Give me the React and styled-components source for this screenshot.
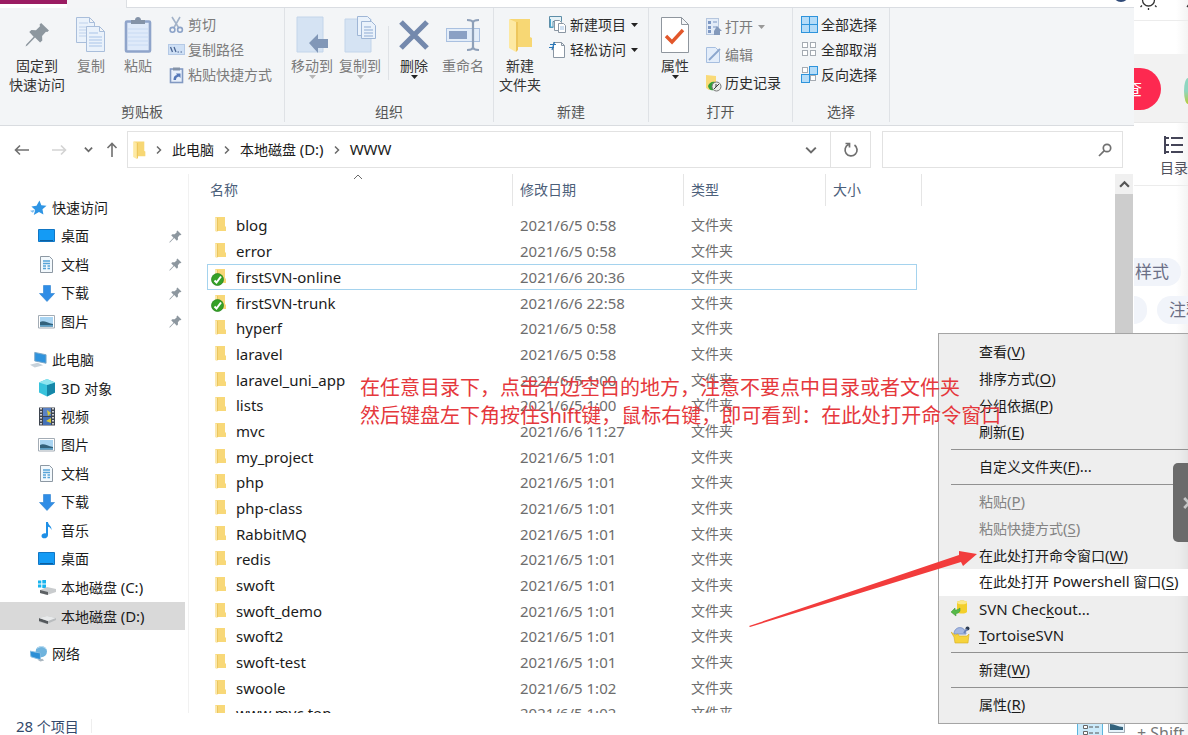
import React from "react";
import styled, { createGlobalStyle, css } from "styled-components";

const Global = createGlobalStyle`
  * { box-sizing: border-box; }
  body { margin: 0; background: #fff; overflow: hidden; }
  body, button, input, table {
    font-family: "Noto Sans", "Noto Sans CJK SC", sans-serif;
    font-size: 14px;
    line-height: 20px;
    color: #1b1b1b;
  }
  button { background: none; border: 0; padding: 0; margin: 0; }
  svg { display: block; flex: none; }
`;

const Page = styled.div`
  position: relative;
  display: flex;
  height: 100vh;
  overflow: hidden;
`;
const Explorer = styled.main`
  flex: 1;
  min-width: 0;
  display: flex;
  flex-direction: column;
`;
const Latin = styled.span`
  font-size: 15px;
`;

/* ---------- tabs and ribbon ---------- */
const TabStrip = styled.div`
  display: flex;
  height: 8px;
  overflow: hidden;
`;
const FileTab = styled.div`
  width: 67px;
  height: 4px;
  background: #9b1d63;
`;
const ActiveTab = styled.div`
  width: 60px;
  background: #f4f5f7;
  border-right: 1px solid #dcdfe3;
`;
const TabRest = styled.div`
  flex: 1;
  display: flex;
  justify-content: flex-end;
  padding-right: 5px;
  border-bottom: 1px solid #dadde2;
`;
const Ribbon = styled.div`
  display: flex;
  height: 118px;
  padding-bottom: 3px;
  background: #f3f5f7;
  border-bottom: 1px solid #d9dce0;
`;
const Group = styled.section`
  flex: none;
  display: flex;
  flex-direction: column;
  justify-content: space-between;
  width: ${(p) => p.$w}px;
  border-right: 1px solid #dfe2e6;
`;
const GroupBody = styled.div`
  display: flex;
  height: 94px;
  padding-left: ${(p) => p.$pad || 0}px;
`;
const Caption = styled.h2`
  margin: 0;
  font-size: 14px;
  font-weight: 400;
  line-height: 20px;
  text-align: center;
  color: #555;
`;
const BigButton = styled.button`
  display: flex;
  flex-direction: column;
  align-items: center;
  width: ${(p) => p.$w}px;
  padding-top: 5px;
  line-height: 19px;
  white-space: nowrap;
  color: ${(p) => (p.$dim ? "#7b7b7b" : "#333")};
`;
const BigIcon = styled.span`
  display: flex;
  align-items: center;
  height: 43px;
`;
const BarLine = styled.div`
  width: 1px;
  height: 54px;
  margin: 18px 0 0 4px;
  background: #dfe2e6;
`;
const SmallColumn = styled.div`
  display: flex;
  flex-direction: column;
  padding-top: ${(p) => p.$top || 4}px;
  padding-left: ${(p) => p.$pad || 0}px;
`;
const SmallButton = styled.button`
  display: flex;
  align-items: center;
  gap: 3px;
  height: ${(p) => p.$h || 25}px;
  white-space: nowrap;
  color: ${(p) => (p.$dim ? "#7b7b7b" : "#2b2b2b")};
`;

/* ---------- address row ---------- */
const AddressRow = styled.div`
  display: flex;
  height: 42px;
  padding: 5px 11px 0 0;
`;
const NavButtons = styled.nav`
  flex: none;
  display: flex;
  align-items: center;
  width: 127px;
  padding-left: 9px;
`;
const NavButton = styled.button`
  display: flex;
  justify-content: center;
  width: ${(p) => p.$w}px;
  &:last-child { margin-left: auto; }
`;
const Address = styled.div`
  flex: 1;
  display: flex;
  align-items: center;
  border: 1px solid #e2e2e2;
  padding-left: 4px;
`;
const Crumb = styled.a`
  color: #1b1b1b;
  text-decoration: none;
  white-space: nowrap;
`;
const CrumbSep = styled.span`
  display: flex;
  justify-content: center;
  width: 26px;
`;
const DropButton = styled.button`
  display: flex;
  justify-content: center;
  width: 38px;
  margin-left: auto;
`;
const Refresh = styled.button`
  display: flex;
  justify-content: center;
  align-items: center;
  align-self: stretch;
  width: 40px;
  border-left: 1px solid #e2e2e2;
`;
const Search = styled.label`
  flex: none;
  display: flex;
  align-items: center;
  width: 241px;
  margin-left: 11px;
  padding-right: 10px;
  border: 1px solid #e2e2e2;
`;
const SearchInput = styled.input`
  flex: 1;
  min-width: 0;
  border: 0;
  outline: 0;
  background: none;
`;

/* ---------- body ---------- */
const Body = styled.div`
  flex: 1;
  min-height: 0;
  display: flex;
`;
const Sidebar = styled.nav`
  flex: none;
  width: 189px;
  margin-top: 6px;
  padding-top: 19px;
  border-right: 1px solid #f1f1f1;
`;
const TreeList = styled.ul`
  list-style: none;
  margin: 0 0 9px;
  padding: 0 3px 0 0;
`;
const TreeItem = styled.li`
  height: 29px;
  &:nth-child(even) { height: 28px; }
`;
const TreeLink = styled.a`
  display: flex;
  align-items: center;
  gap: 5px;
  height: 100%;
  padding-left: ${(p) => (p.$root ? 30 : 38)}px;
  padding-right: 3px;
  color: #1b1b1b;
  text-decoration: none;
  white-space: nowrap;
  background: ${(p) => (p.$active ? "#d9d9d9" : "transparent")};
  > svg:nth-of-type(2) { margin-left: auto; }
`;
const Files = styled.div`
  flex: 1;
  min-width: 0;
  overflow: hidden;
  padding-left: 18px;
`;
const Table = styled.table`
  table-layout: fixed;
  width: 715px;
  border-collapse: separate;
  border-spacing: 0;
`;
const Head = styled.th`
  width: ${(p) => p.$w}px;
  height: 44px;
  padding: 0 0 0 ${(p) => p.$pad}px;
  font-weight: 400;
  text-align: left;
  color: #4c607a;
  background: ${(p) => (p.$line ? "linear-gradient(#e5e5e5, #e5e5e5) right center / 1px 32px no-repeat" : "none")};
`;
const HeadInner = styled.span`
  position: relative;
  display: block;
`;
const SortMark = styled.span`
  position: absolute;
  left: 143px;
  top: -8px;
`;
const Cell = styled.td`
  padding: 0 0 0 7px;
  font-size: ${(p) => (p.$kind ? 14 : 15)}px;
  line-height: 20px;
  white-space: nowrap;
  color: ${(p) => (p.$name ? "#1b1b1b" : "#6d6d6d")};
  ${(p) => p.$name && css`padding-left: 3px;`}
`;
const Row = styled.tr`
  height: 26px;
  &:nth-child(3n + 1) { height: 25px; }
  &:first-child { height: 26px; }
  ${(p) => p.$focus && css`
    ${Cell}:not(:last-child) { box-shadow: inset 0 1px #a5d3ee, inset 0 -1px #a5d3ee; }
    ${Cell}:first-child { box-shadow: inset 0 1px #a5d3ee, inset 0 -1px #a5d3ee, inset 1px 0 #a5d3ee; }
    ${Cell}:nth-child(4) { box-shadow: inset 0 1px #a5d3ee, inset 0 -1px #a5d3ee, inset -1px 0 #a5d3ee; }
  `}
`;
const FileName = styled.a`
  display: flex;
  align-items: center;
  gap: 8px;
  color: inherit;
  text-decoration: none;
`;
const ScrollTrack = styled.div`
  flex: none;
  width: 18px;
  margin: 6px 1px 0 0;
  background: #cdcdcd;
`;
const ScrollUp = styled.button`
  display: flex;
  align-items: center;
  justify-content: center;
  width: 18px;
  height: 20px;
  background: #f0f0f0;
`;
const Status = styled.footer`
  display: flex;
  align-items: center;
  height: 22px;
  padding: 4px 8px 0 16px;
  color: #33496b;
`;
const StatusLine = styled.span`
  width: 1px;
  height: 14px;
  margin-left: 12px;
  background: #eee;
`;
const Views = styled.div`
  display: flex;
  gap: 5px;
  margin: 0 0 0 auto;
`;

/* ---------- web page behind ---------- */
const Web = styled.aside`
  flex: none;
  width: 54px;
  height: 100%;
  overflow: hidden;
  background: linear-gradient(90deg, transparent 42px, #f4f4f4 54px);
  color: #50505c;
  display: flex;
  flex-direction: column;
`;
const WebTop = styled.div`
  height: 21px;
  border-bottom: 1px solid #ececec;
  padding-left: 4px;
`;
const WebBand = styled.div`
  display: flex;
  align-items: flex-start;
  justify-content: space-between;
  height: 69px;
  margin-top: 33px;
  padding-top: 14px;
  background: #f2f2f2;
  border-bottom: 1px solid #e8e8e8;
`;
const RedButton = styled.button`
  display: flex;
  justify-content: flex-end;
  width: 27px;
  height: 42px;
  padding-right: 19px;
  border-radius: 0 21px 21px 0;
  background: #fd2950;
  color: #fff;
  font-size: 17px;
  line-height: 42px;
  overflow: hidden;
  white-space: nowrap;
`;
const Avatar = styled.span`
  flex: none;
  width: 4px;
  height: 26px;
  margin-top: 10px;
  border-radius: 4px 0 0 4px / 13px 0 0 13px;
  background: linear-gradient(#8fd6c0 50%, #b5cc3a);
`;
const Contents = styled.button`
  display: flex;
  flex-direction: column;
  gap: 3px;
  width: 100%;
  height: 63px;
  padding: 12px 0 0 26px;
  border-bottom: 1px solid #ececec;
  color: #50505c;
  white-space: nowrap;
  svg { margin-left: 4px; }
`;
const TagRow = styled.div`
  display: flex;
  gap: 10px;
  margin-top: ${(p) => p.$top}px;
`;
const Tag = styled.a`
  flex: none;
  height: 28px;
  padding: 0 12px 0 ${(p) => p.$left || 1}px;
  border-radius: ${(p) => (p.$cut ? "0 14px 14px 0" : "14px")};
  background: #f1f4fa;
  color: #6b6f86;
  font-size: 17px;
  line-height: 27px;
  text-decoration: none;
  white-space: nowrap;
`;
const ShiftNote = styled.p`
  margin: auto 0 -10px 3px;
  font-size: 16px;
  line-height: 24px;
  color: #777;
  white-space: nowrap;
`;

/* ---------- overlays ---------- */
const Menu = styled.div`
  position: absolute;
  top: 333px;
  right: 0;
  width: 250px;
  padding: 5px 0 4px;
  border: 1px solid #a5a5a5;
  border-right: 0;
  background: #eeeeee;
  box-shadow: inset -12px 0 12px -10px #ddd;
`;
const MenuGroup = styled.div`
  & + & { margin-top: 3px; }
  & + &::before {
    content: "";
    display: block;
    height: 1px;
    margin: 0 0 4px 12px;
    background: #919191;
  }
`;
const MenuItem = styled.button`
  display: flex;
  align-items: center;
  width: 100%;
  height: 27px;
  padding: 0 0 2px 12px;
  white-space: nowrap;
  color: ${(p) => (p.$dim ? "#838383" : "#1b1b1b")};
  background: ${(p) => (p.$hot ? "#fff" : "transparent")};
  &:nth-child(3n) { height: 26px; }
  u { text-underline-offset: 2px; }
`;
const MenuIcon = styled.span`
  width: 28px;
`;
const Note = styled.p`
  position: absolute;
  left: 360px;
  top: 374px;
  margin: 0;
  font-size: 20px;
  line-height: 28px;
  color: #e5383c;
  white-space: nowrap;
`;
const ArrowLayer = styled.svg`
  position: absolute;
  left: 748px;
  top: 545px;
`;
const Drawer = styled.button`
  position: absolute;
  right: 0;
  top: 463px;
  display: flex;
  align-items: center;
  width: 15px;
  height: 79px;
  padding-left: 7px;
  border-radius: 5px 0 0 5px;
  background: #6b6b6b;
  overflow: hidden;
`;

/* ---------- icons ---------- */
const Pin = ({ s = 14, c = "#8d979f" }) => (
  <svg width={s} height={s} viewBox="0 0 24 24" fill={c}>
    <path d="M15.500 1 23 8.200l-1.600 1.500-1.300-.3-3.700 4 .2 4.300-2.100 2-4.900-4.800L2.200 22.600.5 23.400l.7-1.800 7.100-7.500-4.200-4.400 2-2 4.400.1 3.900-3.800-.4-1.500z" />
  </svg>
);
const CopyBig = () => (
  <svg width="30" height="36" viewBox="0 0 30 36" fill="#eaf2fb" stroke="#a9bedb">
    <path d="M.5.500h13l5 5v20H.500zM13.500.500v5h5" />
    <path d="M3 6h9M3 10h12M3 13h12M3 16h12M3 19h12" stroke="#bfd2ec" />
    <path d="M10.500 9.500h13l5 5v20h-18zM23.500 9.500v5h5" />
    <path d="M13 16h9M13 20h13M13 23h13M13 26h13M13 29h13" stroke="#a9c4e8" />
  </svg>
);
const PasteBig = () => (
  <svg width="28" height="36" viewBox="0 0 28 36">
    <rect x="2" y="4.500" width="24" height="30" rx="1" fill="#dfeafa" stroke="#8fa4ca" strokeWidth="2.600" />
    <path d="M4 12h20M4 16h20M4 20h20M4 24h20M4 28h20" stroke="#c8daf3" />
    <path d="M7 3h4c0-4 6-4 6 0h4v4H7z" fill="#8493a8" />
  </svg>
);
const Scissors = () => (
  <svg width="17" height="18" viewBox="0 0 17 18" fill="none" stroke="#8ca3c8" strokeWidth="1.600">
    <path d="M4 1l6.500 10.500M12 1 6 11.500" stroke="#a3b3c9" />
    <circle cx="4.500" cy="13.800" r="2.400" /><circle cx="12" cy="13.800" r="2.400" />
  </svg>
);
const PathIcon = () => (
  <svg width="17" height="12" viewBox="0 0 17 12">
    <rect x=".5" y=".5" width="16" height="10" fill="#cfe0f5" stroke="#b4c9e6" />
    <path d="M2.500 3l2 5M6 3l2 5" stroke="#4a6593" strokeWidth="1.300" /><path d="M9.500 8h1.500M12.500 8H14" stroke="#4a6593" />
  </svg>
);
const ShortcutIcon = () => (
  <svg width="17" height="18" viewBox="0 0 17 18">
    <rect x="2.500" y="3" width="12" height="13.500" fill="#e8f0fb" stroke="#8299c2" strokeWidth="1.600" />
    <path d="M5 1.500h7v3H5z" fill="#8493a8" />
    <path d="M5.500 14c0-3 1-4.500 3.500-5L8 7.500h4.500V12L11 10.500c-2 .3-3 1.500-3 3.500z" fill="#5578b8" />
  </svg>
);
const MoveBig = () => (
  <svg width="34" height="38" viewBox="0 0 34 38">
    <path d="M2 1h26v35H2z" fill="#d5e3f3" stroke="#c3d5ea" />
    <path d="M14 27l9-9v5h10v9H23v5z" fill="#8197b7" />
  </svg>
);
const CopyToBig = () => (
  <svg width="34" height="38" viewBox="0 0 34 38">
    <path d="M2 3h26v33H2z" fill="#d5e3f3" stroke="#c3d5ea" />
    <g fill="#eaf2fb" stroke="#9fb6d6"><path d="M14.500.500h10l3 3v16h-13z" /><path d="M18.500 5.500h10l4 4v13h-14z" /></g>
    <path d="M21 11h7M21 14h9M21 17h9M21 20h9" stroke="#8fabd3" />
  </svg>
);
const DeleteBig = () => (
  <svg width="32" height="32" viewBox="0 0 32 32" stroke="#7489ad" strokeWidth="5.200"><path d="M3 3l26 26M29 3 3 29" /></svg>
);
const RenameBig = () => (
  <svg width="36" height="34" viewBox="0 0 36 34">
    <rect x="1.500" y="10.500" width="33" height="13" fill="#e3edf9" stroke="#a9c0e0" />
    <path d="M4 13h18v8H4z" fill="#8aa0c4" />
    <path d="M22 2c4 0 6 1 6 3v24c0 2-2 3-6 3M34 2c-4 0-6 1-6 3v24c0 2 2 3 6 3" fill="none" stroke="#8ea0b9" strokeWidth="2.200" />
  </svg>
);
const FolderShape = ({ w, h }) => (
  <svg width={w} height={h} viewBox="0 0 24 34">
    <path d="M2 1h20v18l2 1v9H6z" fill="#f7d774" /><path d="M1 1l7 3v30l-7-4z" fill="#fde9a3" /><path d="M8 4v30l2-2V4z" fill="#edc65c" />
  </svg>
);
const NewItem = () => (
  <svg width="18" height="18" viewBox="0 0 18 18" fill="#fff">
    <path d="M.5.500h12v5H4v6H.500z" fill="#e6f2f7" stroke="#5d8ea8" /><path d="M1.500 3v8h3" stroke="#4aa7d0" fill="none" />
    <path d="M5.500 4.500h5l2 2v8h-7z" stroke="#8a96a3" /><path d="M9.500 7.500h5l2 2v7h-7z" stroke="#8a96a3" /><path d="M11 11h4M11 13h4" stroke="#9fc0e4" />
  </svg>
);
const EasyAccess = () => (
  <svg width="18" height="18" viewBox="0 0 18 18">
    <path d="M4.500 1.500h8l3 3v12h-11zM12.500 1.500v3h3" fill="#fff" stroke="#8a96a3" />
    <path d="M1 3.500h6M0 6.500h5M5.500 1 3 9" stroke="#2b78b8" strokeWidth="1.200" fill="none" />
  </svg>
);
const PropsBig = () => (
  <svg width="28" height="36" viewBox="0 0 28 36" fill="#fff" stroke="#8f969e">
    <path d="M.5.500h20l7 7v28H.500zM20.500.500v7h7" />
    <path d="M5 19l6 6 11-12" fill="none" stroke="#e2572b" strokeWidth="3.400" />
  </svg>
);
const OpenIcon = () => (
  <svg width="17" height="18" viewBox="0 0 17 18">
    <rect x="1.500" y=".5" width="12" height="16" fill="#e3ecf8" stroke="#b5c6de" />
    <path d="M3 3h3v3H3zM3 8h3v3H3zM3 12h3v3H3z" fill="#7d97c3" /><path d="M8 4h4M8 9h4" stroke="#7d97c3" />
    <path d="M12 8l5 5h-2v4H9v-4z" fill="#8399bb" />
  </svg>
);
const EditIcon = () => (
  <svg width="17" height="18" viewBox="0 0 17 18">
    <path d="M1.500 1.500h9l4 4v11h-13z" fill="#e3edfa" stroke="#a6bedf" /><path d="M4 14 15 3" stroke="#8ba6cd" strokeWidth="1.800" />
  </svg>
);
const HistoryIcon = () => (
  <svg width="17" height="18" viewBox="0 0 17 18">
    <path d="M1 1l10 1v12l-7 2-3-2z" fill="#f9da78" /><path d="M3 12c1-3 4-5 7-4l-1 8c-3 1-5 0-6-4z" fill="#33a038" />
    <circle cx="11.500" cy="12.500" r="4.500" fill="#e9ece9" stroke="#777" /><path d="M9 15l5-5M11 10v3" stroke="#3c3c3c" />
  </svg>
);
const SelectIcon = ({ kind }) => {
  const on = { all: [1, 1, 1, 1], none: [0, 0, 0, 0], inv: [0, 1, 1, 0] }[kind];
  return (
    <svg width="17" height="17" viewBox="0 0 17 17">
      {on.map((v, i) => {
        const s = v ? 8 : 5;
        const x = (i % 2) * 8 + (v ? 0.5 : 1.5);
        const y = (i > 1 ? 8 : 0) + (v ? 0.5 : 1.5);
        return <rect key={i} x={x} y={y} width={s} height={s} fill={v ? "#b5dcf8" : "#fff"} stroke={v ? "#2e94dc" : "#a5abb2"} />;
      })}
    </svg>
  );
};
const CaretSvg = styled.svg`
  margin-left: ${(p) => (p.$side ? 2 : 0)}px;
`;
const Caret = ({ c = "#222", side }) => (
  <CaretSvg $side={side} width="7" height="4" viewBox="0 0 7 4"><path d="M0 0h7L3.500 4z" fill={c} /></CaretSvg>
);
const Chevron = ({ d, w = 10, c = "#6a6a6a", sw = 1.5 }) => (
  <svg width={w} height={w} viewBox="0 0 10 10" fill="none" stroke={c} strokeWidth={sw}><path d={d} /></svg>
);
const RIGHT = "M3 1.500 6.500 5 3 8.500";
const DOWN = "M1 3l4 4 4-4";
const UP = "M1 7l4-4 4 4";
const Arrow = ({ c = "#707070", turn = 0 }) => (
  <svg width="16" height="16" viewBox="0 0 16 16" fill="none" stroke={c} strokeWidth="1.600">
    <g transform={`rotate(${turn} 8 8)`}><path d="M15 8H1.500M6 3.500 1.500 8 6 12.500" /></g>
  </svg>
);

const treeIcons = {
  star: <svg width="17" height="16" viewBox="0 0 18 16"><path d="M10 0l2 5.200 5.500.5-4.300 3.600 1 5.700-4.700-2.800L4 15.500l1.500-5.300L1.500 6.500l5.400-.8z" fill="#2f95e4" /><path d="M0 11l5-1-2 3z" fill="#7cbcf0" /></svg>,
  desktop: <svg width="18" height="14" viewBox="0 0 18 14"><path d="M.5.500h16v12H.500z" fill="#149bf5" stroke="#1176c4" /><path d="M2 11.500h13" stroke="#0b5e9f" /></svg>,
  doc: <svg width="18" height="17" viewBox="0 0 18 17"><path d="M2.500.500h9l3 3v13h-12z" fill="#f3f9fd" stroke="#8d98a3" /><path d="M5 5h7M5 7.500h7M5 10h3M5 12.500h3M9.500 10H12M9.500 12.500H12" stroke="#58a4d8" strokeWidth="1.500" /></svg>,
  down: <svg width="18" height="17" viewBox="0 0 18 17"><path d="M5.500.500h7v8h4l-7.500 8-7.500-8h4z" fill="#2f8de6" stroke="#2a7fd0" strokeWidth=".6" /></svg>,
  pic: <svg width="18" height="14" viewBox="0 0 18 14"><path d="M.5.500h16v12.500H.500z" fill="#fff" stroke="#a3acb5" /><path d="M2 2h13v9.500H2z" fill="#a9d5f3" /><path d="M2 7c4-2 7 1 13 2v2.500H2z" fill="#33627c" /><path d="M2 10h13v1.500H2z" fill="#5b9dc4" /></svg>,
  pc: <svg width="17" height="17" viewBox="0 0 18 17"><path d="M5 1l12 2.500v9L5 10z" fill="#2f93dd" stroke="#7ba7c7" /><path d="M0 14l8-2 6 2.500L5 17z" fill="#c8d2da" /></svg>,
  cube: <svg width="18" height="18" viewBox="0 0 18 18"><path d="M9 0l8 3.500v10L9 17.500l-8-4v-10z" fill="#37c3dc" /><path d="M9 6l8-2.500v10L9 17.500z" fill="#1687a8" /><path d="M1 3.500 9 0l8 3.500L9 6z" fill="#8fe6f0" /></svg>,
  film: <svg width="18" height="19" viewBox="0 0 18 19"><path d="M1 .5h16v18H1z" fill="#3e4550" /><path d="M5 1h8v8H5z" fill="#5a82c4" /><path d="M5 10h8v8H5z" fill="#4370b8" /><path d="M9 3l4 3-3 3zM8 14l5-3v5z" fill="#d6c935" /><path d="M3 1v18M15 1v18" stroke="#fff" strokeWidth="1.500" strokeDasharray="1.500 1.500" /></svg>,
  music: <svg width="18" height="17" viewBox="0 0 18 17"><path d="M8 0h2c0 3 4 4 3.500 8-.6-2-2-3-3.500-3.200V13c0 4-6.500 4.500-6.500 1 0-2.500 3-3.300 4.500-2.600z" fill="#1e8fe6" /></svg>,
  diskC: <svg width="18" height="17" viewBox="0 0 18 17"><path d="M0 1.500h3.300v3H0zM4.300 1h3.700v3.500H4.300zM0 5.500h3.300v3H0zM4.300 5.500h3.700V9H4.300z" fill="#19b4ee" /><path d="M2 11l7-3 9 2v3l-9 3-7-2z" fill="#c9ccce" /><path d="M2 11l8 2v3l-8-2z" fill="#5d6164" /></svg>,
  diskD: <svg width="18" height="17" viewBox="0 0 18 17"><path d="M1 10l8-2 9 2v2l-9 4-8-2z" fill="#b9bcbe" /><path d="M1 10l9 3v3l-9-3z" fill="#54585b" /><path d="M1 10l8-2 9 2-8 3z" fill="#e8eaeb" /></svg>,
  net: <svg width="17" height="17" viewBox="0 0 18 17"><circle cx="12" cy="6.500" r="6" fill="#6fb3dd" /><path d="M8 3c3-3 7-2 9 1" stroke="#c9e4f5" fill="none" /><path d="M0 6l11 2v7L1 12z" fill="#2b8fd6" stroke="#86bde2" /><path d="M8 15l5-1 2 2-4 1z" fill="#aab6bf" /></svg>,
};
const FolderRow = ({ svn }) => (
  <svg width="18" height="20" viewBox="0 0 18 20">
    <path d="M5 2h10v9l1 1v4H5z" fill="#f8d878" /><path d="M5 2l2 1v14l-2-1z" fill="#fbe8ad" /><path d="M7 3v13.500l1-.5V3z" fill="#ecc65f" />
    {svn && <g><circle cx="7.500" cy="12.500" r="6" fill="#35a127" stroke="#238019" strokeWidth=".7" /><path d="M4.500 13.500 6.500 15.500 11 9.500" fill="none" stroke="#fff" strokeWidth="2" /></g>}
  </svg>
);

/* ---------- data ---------- */
const quick = [["desktop", "桌面"], ["doc", "文档"], ["down", "下载"], ["pic", "图片"]];
const pc = [
  ["cube", <><Latin>3D</Latin> 对象</>], ["film", "视频"], ["pic", "图片"], ["doc", "文档"], ["down", "下载"],
  ["music", "音乐"], ["desktop", "桌面"],
  ["diskC", <>本地磁盘 <Latin>(C:)</Latin></>], ["diskD", <>本地磁盘 <Latin>(D:)</Latin></>],
];
const files = [
  ["blog", "2021/6/5 0:58"], ["error", "2021/6/5 0:58"], ["firstSVN-online", "2021/6/6 20:36"],
  ["firstSVN-trunk", "2021/6/6 22:58"], ["hyperf", "2021/6/5 0:58"], ["laravel", "2021/6/5 0:58"],
  ["laravel_uni_app", "2021/6/5 1:00"], ["lists", "2021/6/5 1:00"], ["mvc", "2021/6/6 11:27"],
  ["my_project", "2021/6/5 1:01"], ["php", "2021/6/5 1:01"], ["php-class", "2021/6/5 1:01"],
  ["RabbitMQ", "2021/6/5 1:01"], ["redis", "2021/6/5 1:01"], ["swoft", "2021/6/5 1:01"],
  ["swoft_demo", "2021/6/5 1:01"], ["swoft2", "2021/6/5 1:01"], ["swoft-test", "2021/6/5 1:01"],
  ["swoole", "2021/6/5 1:02"], ["www.mvc.top", "2021/6/5 1:02"],
];
const CheckoutIcon = (
  <svg width="18" height="18" viewBox="0 0 18 18"><path d="M6 2c2-2 8-2 10 0v10c-2 2-8 2-10 0z" fill="#f3cf2b" /><ellipse cx="11" cy="2.500" rx="5" ry="1.800" fill="#fbe98a" /><path d="M9 8v3c-1 2-3 2.500-4 2.500V16L0 12l4-4v2c2 0 3-.5 5-2z" fill="#55b948" stroke="#3b9333" strokeWidth=".5" /></svg>
);
const TortoiseIcon = (
  <svg width="20" height="18" viewBox="0 0 20 18"><path d="M3 8c0-8 11-9 12 0z" fill="#a5b8e2" stroke="#7f96c8" /><circle cx="16.500" cy="2.500" r="2" fill="#2c3c52" /><path d="M13 7l3-4" stroke="#6a83ba" strokeWidth="2" /><path d="M0 6l4 3 3-1 1 2h8l2-2-1 9H4L3 11z" fill="#f6d33c" stroke="#d5ab22" strokeWidth=".6" /></svg>
);
const menu = [
  [{ t: "查看", k: "V" }, { t: "排序方式", k: "O" }, { t: "分组依据", k: "P" }, { t: "刷新", k: "E" }],
  [{ t: "自定义文件夹", k: "F", end: "..." }],
  [
    { t: "粘贴", k: "P", dim: true }, { t: "粘贴快捷方式", k: "S", dim: true }, { t: "在此处打开命令窗口", k: "W" },
    { t: <>在此处打开 <Latin>Powershell</Latin> 窗口</>, k: "S", hot: true },
    { icon: CheckoutIcon, label: <>SVN Chec<u>k</u>out...</> },
    { icon: TortoiseIcon, label: <><u>T</u>ortoiseSVN</> },
  ],
  [{ t: "新建", k: "W" }],
  [{ t: "属性", k: "R" }],
];

const Tree = ({ root, icon, items, pinned }) => (
  <TreeList>
    <TreeItem><TreeLink href="#" $root>{treeIcons[icon]}{root}</TreeLink></TreeItem>
    {items.map(([i, t]) => (
      <TreeItem key={i}>
        <TreeLink href="#" $active={i === "diskD"}>{treeIcons[i]}<span>{t}</span>{pinned && <Pin s={13} />}</TreeLink>
      </TreeItem>
    ))}
  </TreeList>
);

export default function App() {
  return (
    <Page>
      <Global />
      <Explorer>
        <TabStrip>
          <FileTab />
          <ActiveTab />
          <TabRest><svg width="16" height="3" viewBox="0 0 16 3"><circle cx="8" cy="-6" r="8" fill="#2f4a78" /></svg></TabRest>
        </TabStrip>
        <Ribbon>
          <Group $w={285}>
            <GroupBody $pad={4}>
              <BigButton $w={66}><BigIcon><Pin s={25} /></BigIcon>固定到<br />快速访问</BigButton>
              <BigButton $w={42} $dim><BigIcon><CopyBig /></BigIcon>复制</BigButton>
              <BigButton $w={52} $dim><BigIcon><PasteBig /></BigIcon>粘贴</BigButton>
              <SmallColumn $pad={4}>
                <SmallButton $dim><Scissors />剪切</SmallButton>
                <SmallButton $dim><PathIcon />复制路径</SmallButton>
                <SmallButton $dim><ShortcutIcon />粘贴快捷方式</SmallButton>
              </SmallColumn>
            </GroupBody>
            <Caption>剪贴板</Caption>
          </Group>
          <Group $w={209}>
            <GroupBody $pad={3}>
              <BigButton $w={48} $dim><BigIcon><MoveBig /></BigIcon>移动到<Caret c="#b5b5b5" /></BigButton>
              <BigButton $w={48} $dim><BigIcon><CopyToBig /></BigIcon>复制到<Caret c="#b5b5b5" /></BigButton>
              <BarLine />
              <BigButton $w={50}><BigIcon><DeleteBig /></BigIcon>删除<Caret /></BigButton>
              <BigButton $w={48} $dim><BigIcon><RenameBig /></BigIcon>重命名</BigButton>
            </GroupBody>
            <Caption>组织</Caption>
          </Group>
          <Group $w={155}>
            <GroupBody>
              <BigButton $w={52}><BigIcon><FolderShape w={24} h={34} /></BigIcon>新建<br />文件夹</BigButton>
              <SmallColumn $pad={3}>
                <SmallButton><NewItem />新建项目<Caret side /></SmallButton>
                <SmallButton><EasyAccess />轻松访问<Caret side /></SmallButton>
              </SmallColumn>
            </GroupBody>
            <Caption>新建</Caption>
          </Group>
          <Group $w={144}>
            <GroupBody>
              <BigButton $w={52}><BigIcon><PropsBig /></BigIcon>属性<Caret /></BigButton>
              <SmallColumn $pad={4} $top={5}>
                <SmallButton $h={28} $dim><OpenIcon />打开<Caret c="#999" side /></SmallButton>
                <SmallButton $h={28} $dim><EditIcon />编辑</SmallButton>
                <SmallButton $h={28}><HistoryIcon />历史记录</SmallButton>
              </SmallColumn>
            </GroupBody>
            <Caption>打开</Caption>
          </Group>
          <Group $w={97}>
            <GroupBody>
              <SmallColumn $pad={8}>
                <SmallButton><SelectIcon kind="all" />全部选择</SmallButton>
                <SmallButton><SelectIcon kind="none" />全部取消</SmallButton>
                <SmallButton><SelectIcon kind="inv" />反向选择</SmallButton>
              </SmallColumn>
            </GroupBody>
            <Caption>选择</Caption>
          </Group>
        </Ribbon>
        <AddressRow>
          <NavButtons>
            <NavButton $w={26} aria-label="后退"><Arrow /></NavButton>
            <NavButton $w={48} aria-label="前进"><Arrow c="#d3d3d3" turn={180} /></NavButton>
            <NavButton $w={10} aria-label="最近"><Chevron d={DOWN} w={9} sw={2} /></NavButton>
            <NavButton $w={30} aria-label="向上"><Arrow turn={90} /></NavButton>
          </NavButtons>
          <Address>
            <FolderShape w={14} h={18} />
            <CrumbSep><Chevron d={RIGHT} /></CrumbSep>
            <Crumb href="#">此电脑</Crumb>
            <CrumbSep><Chevron d={RIGHT} /></CrumbSep>
            <Crumb href="#">本地磁盘 <Latin>(D:)</Latin></Crumb>
            <CrumbSep><Chevron d={RIGHT} /></CrumbSep>
            <Crumb href="#"><Latin>WWW</Latin></Crumb>
            <DropButton aria-label="展开"><Chevron d={DOWN} w={12} sw={1.7} /></DropButton>
            <Refresh aria-label="刷新">
              <svg width="16" height="16" viewBox="0 0 16 16" fill="none" stroke="#707070" strokeWidth="1.700"><path d="M11.500 3a6 6 0 1 1-6-.5M2.500 1.500h4v4" /></svg>
            </Refresh>
          </Address>
          <Search>
            <SearchInput aria-label="搜索" />
            <svg width="14" height="14" viewBox="0 0 14 14" fill="none" stroke="#707070" strokeWidth="1.700"><circle cx="9" cy="5" r="3.700" /><path d="M6.300 7.700 1 13" /></svg>
          </Search>
        </AddressRow>
        <Body>
          <Sidebar>
            <Tree root="快速访问" icon="star" items={quick} pinned />
            <Tree root="此电脑" icon="pc" items={pc} />
            <Tree root="网络" icon="net" items={[]} />
          </Sidebar>
          <Files>
            <Table>
              <thead>
                <tr>
                  <Head $w={306} $pad={3} $line><HeadInner>名称<SortMark><Chevron d={UP} w={10} sw={1} /></SortMark></HeadInner></Head>
                  <Head $w={171} $pad={7} $line>修改日期</Head>
                  <Head $w={142} $pad={7} $line>类型</Head>
                  <Head $w={91} $pad={7}>大小</Head>
                  <Head $w={5} $pad={0} $line />
                </tr>
              </thead>
              <tbody>
                {files.map(([n, d], i) => (
                  <Row key={n} $focus={i === 2}>
                    <Cell $name><FileName href="#"><FolderRow svn={n.startsWith("firstSVN")} />{n}</FileName></Cell>
                    <Cell>{d}</Cell>
                    <Cell $kind>文件夹</Cell>
                    <Cell />
                    <Cell />
                  </Row>
                ))}
              </tbody>
            </Table>
          </Files>
          <ScrollTrack><ScrollUp aria-label="向上滚动"><Chevron d={UP} w={11} sw={2} c="#555" /></ScrollUp></ScrollTrack>
        </Body>
        <Status>
          <span><Latin>28</Latin> 个项目</span><StatusLine />
          <Views>
            <svg width="26" height="18" viewBox="0 0 26 18"><path d="M.5.500h25v20H.500z" fill="#cbeafa" stroke="#5bb5dd" /><path d="M6.500 8.500h4v3h-4zM6.500 14.500h4v3h-4z" fill="#fff" stroke="#666" /><path d="M12 10h4M18 10h4M12 16h4M18 16h4" stroke="#555" /></svg>
            <svg width="18" height="18" viewBox="0 0 18 18"><path d="M.5.500h16v15H.500z" fill="#e6f3fb" stroke="#a3acb5" /><path d="M2 7c5 0 8 3 13 3v3H2z" fill="#33627c" /></svg>
          </Views>
        </Status>
      </Explorer>
      <Web>
        <WebTop>
          <svg width="50" height="12" viewBox="0 0 50 12" fill="none" stroke="#333" strokeWidth="1.300"><circle cx="10.500" cy="0" r="6" /><path d="M10.500 8v2M4 5.500 2.500 7M17 5.500 18.500 7" /><path d="M49 7l3-4" /></svg>
        </WebTop>
        <WebBand><RedButton>查</RedButton><Avatar /></WebBand>
        <Contents>
          <svg width="20" height="20" viewBox="0 0 20 20" stroke="#454558" strokeWidth="2" fill="none"><path d="M1 1v18M1 3h4M7 3h12M1 10h4M7 10h12M1 17h4M7 17h12" /></svg>
          目录
        </Contents>
        <TagRow $top={72}><Tag href="#" $cut>样式</Tag></TagRow>
        <TagRow $top={10}><Tag href="#" $cut aria-label="标签" /><Tag href="#" $left={12}>注释</Tag></TagRow>
        <ShiftNote>+ Shift</ShiftNote>
      </Web>
      <Menu role="menu">
        {menu.map((g, gi) => (
          <MenuGroup key={gi}>
            {g.map((m, i) => (
              <MenuItem key={i} role="menuitem" $dim={m.dim} $hot={m.hot}>
                <MenuIcon>{m.icon}</MenuIcon>
                {m.label ? <Latin>{m.label}</Latin> : <span>{m.t}<Latin>(<u>{m.k}</u>){m.end}</Latin></span>}
              </MenuItem>
            ))}
          </MenuGroup>
        ))}
      </Menu>
      <Note>在任意目录下，点击右边空白的地方，注意不要点中目录或者文件夹<br />然后键盘左下角按住shift键，鼠标右键，即可看到：在此处打开命令窗口</Note>
      <ArrowLayer width="232" height="84" viewBox="0 0 232 84"><path d="M1 81 211 10V6l18 3-14 12-2-4L2 82z" fill="#f23c3c" /></ArrowLayer>
      <Drawer aria-label="展开侧栏"><Chevron d={RIGHT} w={14} c="#c5c5c5" sw={2} /></Drawer>
    </Page>
  );
}
